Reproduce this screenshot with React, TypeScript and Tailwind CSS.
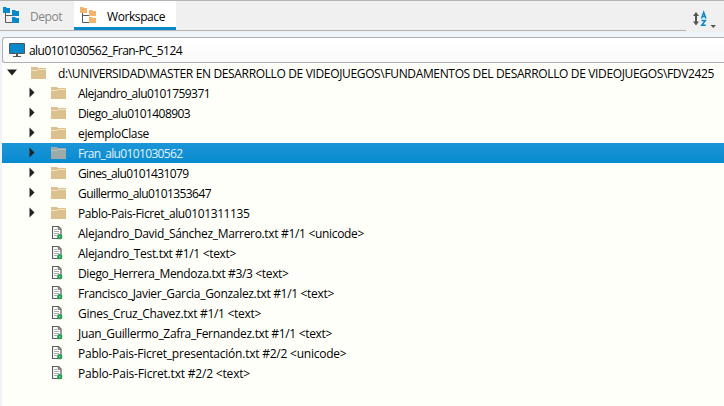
import { useLayoutEffect, useRef, useState } from "react";

function FitText({ text, width, className = "" }: { text: string; width: number; className?: string }) {
  const ref = useRef<HTMLSpanElement>(null);
  const [spacing, setSpacing] = useState(0);
  useLayoutEffect(() => {
    if (ref.current) {
      const natural = ref.current.getBoundingClientRect().width;
      setSpacing((width - natural) / text.length);
    }
  }, [text, width]);
  return (
    <span ref={ref} className={`whitespace-pre ${className}`} style={{ letterSpacing: `${spacing}px` }}>
      {text}
    </span>
  );
}

function TreeIcon({ color }: { color: string }) {
  return (
    <svg width="17" height="17" viewBox="0 0 17 17" className="shrink-0">
      <path d="M2.500 5V15.500H9M2.500 8.500H9" fill="none" stroke="#5a5a5a" />
      <path d="M0 0h3l1 1h3v5H0zM9 3h3l1 1h3v5H9zM9 10h3l1 1h3v5H9z" fill={color} />
    </svg>
  );
}

function Folder({ selected = false }: { selected?: boolean }) {
  return (
    <svg width="16" height="12" viewBox="0 0 16 12" className="shrink-0">
      <path d="M0 0h6l1 1h8v11H0z" fill={selected ? "#9eaaa8" : "#dcc18f"} />
      <path d="M0 3.500h6l1-1h8" fill="none" stroke={selected ? "#b9c2c0" : "#f0e2c6"} />
    </svg>
  );
}

function FileIcon() {
  return (
    <svg width="12" height="14" viewBox="0 0 12 14" className="shrink-0">
      <path d="M.5.5h6l2.500 2.500v9.500H.5z" fill="#fff" stroke="#5a5a5a" strokeWidth="1.200" />
      <path d="M6 .5v3h3" fill="#999" stroke="#777" strokeWidth=".8" />
      <path d="M2 3.500h3M2 5.500h5M2 7.500h5M2 9.500h3" fill="none" stroke="#aaa" />
      <circle cx="7.700" cy="10.700" r="2.600" fill="#27a150" />
      <circle cx="7.700" cy="10.700" r=".8" fill="#8bd0a1" />
    </svg>
  );
}

const folders: [string, number][] = [
  ["Alejandro_alu0101759371", 132],
  ["Diego_alu0101408903", 112],
  ["ejemploClase", 71],
  ["Fran_alu0101030562", 104.5],
  ["Gines_alu0101431079", 110.5],
  ["Guillermo_alu0101353647", 133],
  ["Pablo-Pais-Ficret_alu0101311135", 171.5],
];

const files: [string, number][] = [
  ["Alejandro_David_Sánchez_Marrero.txt #1/1 <unicode>", 286],
  ["Alejandro_Test.txt #1/1 <text>", 158],
  ["Diego_Herrera_Mendoza.txt #3/3 <text>", 210.5],
  ["Francisco_Javier_Garcia_Gonzalez.txt #1/1 <text>", 256],
  ["Gines_Cruz_Chavez.txt #1/1 <text>", 183],
  ["Juan_Guillermo_Zafra_Fernandez.txt #1/1 <text>", 254],
  ["Pablo-Pais-Ficret_presentación.txt #2/2 <unicode>", 268.5],
  ["Pablo-Pais-Ficret.txt #2/2 <text>", 172],
];

export default function App() {
  return (
    <div className="flex h-[406px] w-[724px] flex-col overflow-hidden bg-[#eff3fa] font-['Open_Sans','Noto_Sans',sans-serif] text-[12px] leading-5 text-black">
      <header className="flex h-8 shrink-0 border-t border-[#b4b4b4] bg-[#f0f0f0]">
        <div className="flex h-[30px] w-[686px] border-b border-[#b4b4b4]">
          <div className="flex w-[74px] items-start pt-[6px] pl-[3px]">
            <TreeIcon color="#0788ca" />
            <FitText text="Depot" width={32} className="ml-[10px] text-[#858585]" />
          </div>
          <div className="flex h-[29px] w-[102px] items-start border-b-[3px] border-[#0788ca] bg-white pt-[6px] pl-[6px]">
            <TreeIcon color="#f5b46d" />
            <FitText text="Workspace" width={58} className="ml-[10px]" />
          </div>
        </div>
        <svg width="38" height="31" viewBox="686 1 38 31">
          <path d="M696 14v9" stroke="#555" strokeWidth="2" />
          <path d="M693 16l3-4 3 4zM693 21.500l3 4 3-4zM710.500 25h5.500l-2.750 3z" fill="#555" />
          <path d="M701.500 18.500l2.200-6 2.200 6M702.300 16.500h3M701.500 20.500h3.800l-3.500 4.700h4" fill="none" stroke="#0788ca" strokeWidth="1.500" />
        </svg>
      </header>
      <main className="flex flex-1 flex-col pt-[5px] pl-[2px]">
        <div className="flex h-[26px] shrink-0 items-center rounded-l-[3px] border border-r-0 border-[#b0b0b0] bg-gradient-to-b from-white to-[#fafafa] pl-[6px]">
          <svg width="17" height="15" viewBox="0 0 17 15">
            <path d="M.5.5h15v10H.5z" fill="#0788ca" stroke="#555" />
            <path d="M7 11h2v2h3v1H4v-1h3z" fill="#555" />
          </svg>
          <FitText text="alu0101030562_Fran-PC_5124" width={153} className="ml-[3px] pt-[2px]" />
        </div>
        <div className="flex-1 bg-[#fffffa]">
          <div className="flex h-5 items-center">
            <svg width="29" height="20" viewBox="0 0 29 20"><path d="M5 6.500h10l-5 6z" fill="#222" /></svg>
            <Folder />
            <FitText text="d:\UNIVERSIDAD\MASTER EN DESARROLLO DE VIDEOJUEGOS\FUNDAMENTOS DEL DESARROLLO DE VIDEOJUEGOS\FDV2425" width={656} className="ml-[11px] pt-[2px]" />
          </div>
          {folders.map(([name, width]) => {
            const selected = name.startsWith("Fran");
            return (
              <div key={name} className={`flex h-5 items-center ${selected ? "bg-gradient-to-b from-[#1b95d7] to-[#078bd0] text-[#e4f2fa]" : ""}`}>
                <svg width="49" height="20" viewBox="0 0 49 20"><path d="M27.500 4.500v10l5-5z" fill="#222" /></svg>
                <Folder selected={selected} />
                <FitText text={name} width={width} className="ml-[11px] pt-[2px]" />
              </div>
            );
          })}
          {files.map(([name, width]) => (
            <div key={name} className="flex h-5 items-center pl-[50px]">
              <FileIcon />
              <FitText text={name} width={width} className="ml-[14px] pt-[2px]" />
            </div>
          ))}
        </div>
      </main>
    </div>
  );
}
